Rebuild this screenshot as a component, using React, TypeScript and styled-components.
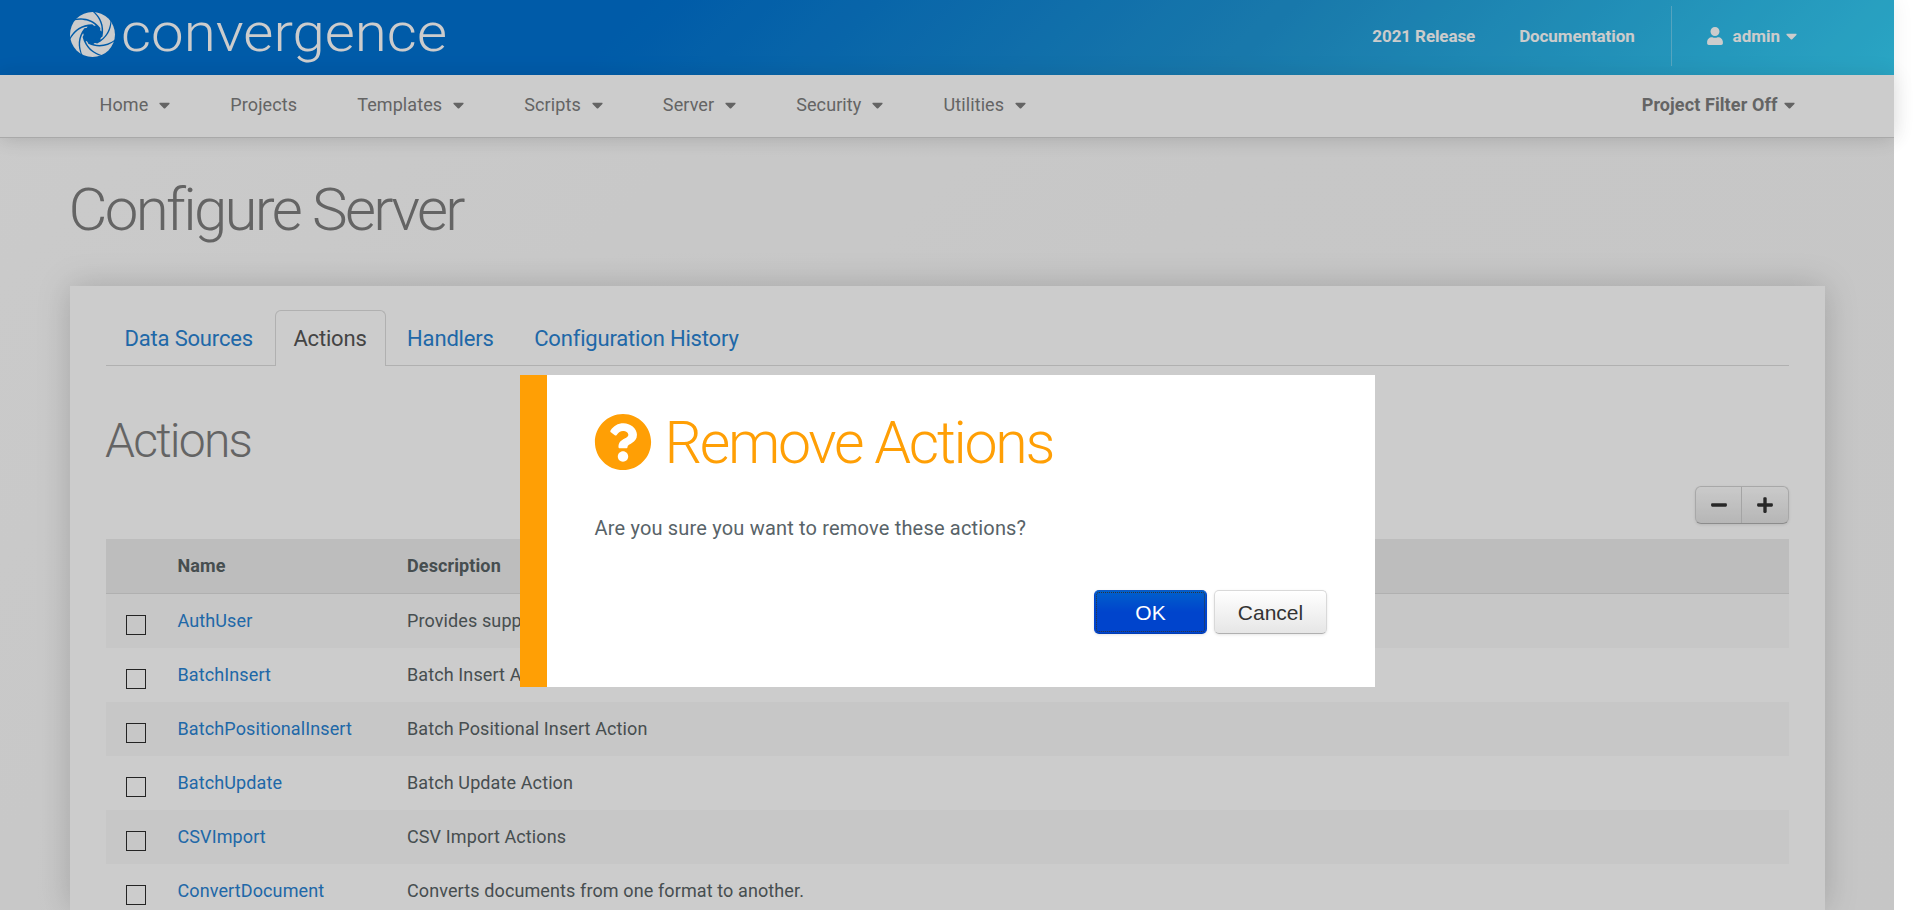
import React from "react";
import styled, { createGlobalStyle, css } from "styled-components";
import { FaCaretDown, FaUser, FaQuestionCircle, FaMinus, FaPlus } from "react-icons/fa";

const GlobalStyle = createGlobalStyle`
  * { box-sizing: border-box; }
  body {
    margin: 0;
    height: 910px;
    overflow: hidden;
    background: #fff;
    font-family: Roboto, sans-serif;
    font-size: 18px;
    color: #586264;
  }
  h1, h2, p { margin: 0; }
`;

const Page = styled.div`
  position: relative;
  width: 1894px;
  height: 910px;
`;

const Backdrop = styled.div`
  height: 910px;
  display: flex;
  flex-direction: column;
  background: linear-gradient(135deg, #fefefe 0%, #f9f9f9 50%, #f8f8f8 100%);
`;

const Top = styled.header`
  flex: none;
  height: 138px;
  box-shadow: 0 0 20px rgba(0, 0, 0, 0.07);
`;

const Banner = styled.div`
  display: flex;
  align-items: center;
  height: 75px;
  padding: 0 97px 0 70px;
  background: linear-gradient(135deg, #0072d3 0%, #0072d3 33%, #1f97d6 66%, #35cff5 100%);
  color: #fff;
`;

const Logo = styled.svg`
  display: block;
  width: 380px;
  height: 75px;
  margin-right: auto;
`;

const BannerLink = styled.a`
  font-size: 17px;
  font-weight: 700;
  line-height: 20px;
  letter-spacing: -0.1px;
  margin: 0 44px 3px 0;
  white-space: nowrap;
`;

const UserMenu = styled.div`
  display: flex;
  align-items: center;
  height: 60px;
  margin: 0 0 3px -8px;
  padding-left: 35px;
  border-left: 1px solid rgba(255, 255, 255, 0.3);
  font-size: 17px;
  font-weight: 700;
`;

const UserIcon = styled(FaUser)`
  width: 16px;
  height: 18px;
  margin-right: 10px;
`;

const Caret = styled(FaCaretDown)<{ $gap: number }>`
  width: 11px;
  height: 18px;
  margin-left: ${(p) => p.$gap}px;
`;

const NavBar = styled.nav`
  display: flex;
  height: 63px;
  padding: 0 99px 2px 99.5px;
  align-items: center;
  background: #fff;
  border-bottom: 1px solid #d4d4d4;
  box-shadow: 0 0 20px rgba(0, 0, 0, 0.1);
  color: #7d7d7d;
  line-height: 20px;
  letter-spacing: 0.1px;
`;

const NavItem = styled.div<{ $strong?: boolean }>`
  display: flex;
  align-items: center;
  margin-right: 60px;
  ${(p) =>
    p.$strong &&
    css`
      margin: 0 0 0 auto;
      font-weight: 700;
    `}
`;

const Title = styled.h1`
  margin: 37px 0 0 68.5px;
  font-size: 60px;
  line-height: 70px;
  font-weight: 300;
  letter-spacing: -2.7px;
  color: #7d7d7d;
`;

const Card = styled.main`
  flex: 1;
  margin: 41px 69px 0 70px;
  padding: 24px 36px 0;
  background: #fff;
  box-shadow: 0 0 32px rgba(0, 0, 0, 0.18);
  min-height: 0;
  overflow: visible;
`;

const Tabs = styled.div`
  display: flex;
  height: 56px;
  box-shadow: inset 0 -1px #dcdcdc;
`;

const Tab = styled.div<{ $active?: boolean }>`
  height: 56px;
  margin-right: 3px;
  padding: 0 18px 0 17.5px;
  border: 1px solid transparent;
  border-bottom: 0;
  border-radius: 6px 6px 0 0;
  font-size: 22px;
  line-height: 55px;
  letter-spacing: -0.18px;
  color: #2882d2;
  white-space: nowrap;
  ${(p) =>
    p.$active &&
    css`
      border-color: #dcdcdc;
      background: #fff;
      color: #555;
    `}
`;

const SectionTitle = styled.h2`
  margin: 47px 0 0 -1px;
  font-size: 48px;
  line-height: 56px;
  font-weight: 300;
  letter-spacing: -1.8px;
  color: #7d7d7d;
`;

const Tools = styled.div`
  display: flex;
  width: 94px;
  height: 38px;
  margin: 17px 0 15px auto;
  border: 1px solid #d2d2d2;
  border-bottom-color: #b0b0b0;
  border-radius: 6px;
  background: linear-gradient(#fdfdfd, #e4e4e4);
  box-shadow: 0 1px 3px rgba(0, 0, 0, 0.1);
`;

const ToolButton = styled.div`
  flex: 0 0 45px;
  display: flex;
  align-items: center;
  justify-content: center;
  padding-bottom: 1px;
  color: #333;
  & + & {
    flex: 1;
    border-left: 1px solid #cdcdcd;
  }
  svg {
    width: 18px;
    height: 18px;
  }
`;

const Row = styled.div<{ $head?: boolean }>`
  display: grid;
  grid-template-columns: 71.5px 229.5px 1fr;
  height: 54px;
  line-height: 53px;
  letter-spacing: 0.11px;
  &:nth-child(even) {
    background: #f9f9f9;
  }
  ${(p) =>
    p.$head &&
    css`
      height: 55px;
      line-height: 54px;
      background: #ededed;
      border-bottom: 1px solid #dcdcdc;
      font-weight: 700;
    `}
`;

const Check = styled.span`
  width: 20px;
  height: 20px;
  margin: 21px 0 0 20px;
  border: 1px solid #2c2c2c;
`;

const Name = styled.a`
  color: #2882d2;
`;

const Overlay = styled.div`
  position: absolute;
  inset: 0;
  background: rgba(0, 0, 0, 0.2);
`;

const Dialog = styled.section`
  position: absolute;
  left: 520px;
  top: 375px;
  width: 855px;
  height: 312px;
  padding: 37px 48px 0 47.5px;
  border-left: 27px solid #ff9f05;
  background: #fff;
  color: #586368;
`;

const DialogTitle = styled.h1`
  display: flex;
  align-items: center;
  gap: 12.5px;
  height: 59px;
  font-size: 59px;
  line-height: 59px;
  font-weight: 300;
  letter-spacing: -2.3px;
  color: #ff9f05;
  svg {
    width: 58px;
    height: 58px;
    margin-left: -0.5px;
  }
  span {
    padding-top: 2px;
  }
`;

const Message = styled.p`
  margin-top: 45px;
  font-size: 20px;
  line-height: 24px;
  letter-spacing: 0.18px;
`;

const Buttons = styled.div`
  display: flex;
  justify-content: flex-end;
  gap: 7px;
  margin-top: 50px;
`;

const Button = styled.button<{ $primary?: boolean }>`
  width: 113px;
  height: 44px;
  padding: 1px 0 0;
  border: 1px solid #d9d9d9;
  border-bottom-color: #b0b0b0;
  border-radius: 5px;
  background: linear-gradient(#fff, #e6e6e6);
  box-shadow: 0 1px 3px rgba(0, 0, 0, 0.1);
  font: 21px "Liberation Sans", Arial, sans-serif;
  color: #333;
  ${(p) =>
    p.$primary &&
    css`
      border-color: #0a58c4 #0044cc #003cb4;
      background: linear-gradient(#0060cc, #0044cc 50%);
      color: #fff;
      outline: 1px dotted #333;
      outline-offset: -3px;
    `}
`;

const menu: [string, boolean][] = [
  ["Home", true],
  ["Projects", false],
  ["Templates", true],
  ["Scripts", true],
  ["Server", true],
  ["Security", true],
  ["Utilities", true],
];

const actions: [string, string][] = [
  ["AuthUser", "Provides support for authenticating users"],
  ["BatchInsert", "Batch Insert Action"],
  ["BatchPositionalInsert", "Batch Positional Insert Action"],
  ["BatchUpdate", "Batch Update Action"],
  ["CSVImport", "CSV Import Actions"],
  ["ConvertDocument", "Converts documents from one format to another."],
];

const blades = [0, 51.4, 102.9, 154.3, 205.7, 257.1, 308.6];

export default function App() {
  return (
    <>
      <GlobalStyle />
      <Page>
        <Backdrop>
          <Top>
            <Banner>
              <Logo viewBox="0 0 380 75" fill="#fff">
                <g transform="translate(22.5 34.5)">
                  <circle r="22.5" />
                  <g fill="#0072d3">
                    <circle r="8.6" />
                    {blades.map((a) => (
                      <path
                        key={a}
                        transform={`rotate(${a})`}
                        d="M1 -23.500C8 -18 12.500 -9 10 2L6 5L4 -7L9 -3C10 -10 6 -18 -0.500 -23.500Z"
                      />
                    ))}
                  </g>
                </g>
                <text
                  x="51"
                  y="51"
                  fontFamily="Roboto, sans-serif"
                  fontSize="54.500"
                  fontWeight="300"
                  textLength="326"
                  lengthAdjust="spacingAndGlyphs"
                >
                  convergence
                </text>
              </Logo>
              <BannerLink>2021 Release</BannerLink>
              <BannerLink>Documentation</BannerLink>
              <UserMenu>
                <UserIcon />
                admin
                <Caret $gap={6} />
              </UserMenu>
            </Banner>
            <NavBar>
              {menu.map(([label, caret]) => (
                <NavItem key={label}>
                  {label}
                  {caret && <Caret $gap={11} />}
                </NavItem>
              ))}
              <NavItem $strong>
                Project Filter Off
                <Caret $gap={6.5} />
              </NavItem>
            </NavBar>
          </Top>
          <Title>Configure Server</Title>
          <Card>
            <Tabs>
              <Tab>Data Sources</Tab>
              <Tab $active>Actions</Tab>
              <Tab>Handlers</Tab>
              <Tab>Configuration History</Tab>
            </Tabs>
            <SectionTitle>Actions</SectionTitle>
            <Tools>
              <ToolButton>
                <FaMinus />
              </ToolButton>
              <ToolButton>
                <FaPlus />
              </ToolButton>
            </Tools>
            <div>
              <Row $head>
                <span />
                <span>Name</span>
                <span>Description</span>
              </Row>
              {actions.map(([name, text]) => (
                <Row key={name}>
                  <Check />
                  <Name>{name}</Name>
                  <span>{text}</span>
                </Row>
              ))}
            </div>
          </Card>
        </Backdrop>
        <Overlay />
        <Dialog>
          <DialogTitle>
            <FaQuestionCircle />
            <span>Remove Actions</span>
          </DialogTitle>
          <Message>Are you sure you want to remove these actions?</Message>
          <Buttons>
            <Button $primary>OK</Button>
            <Button>Cancel</Button>
          </Buttons>
        </Dialog>
      </Page>
    </>
  );
}
